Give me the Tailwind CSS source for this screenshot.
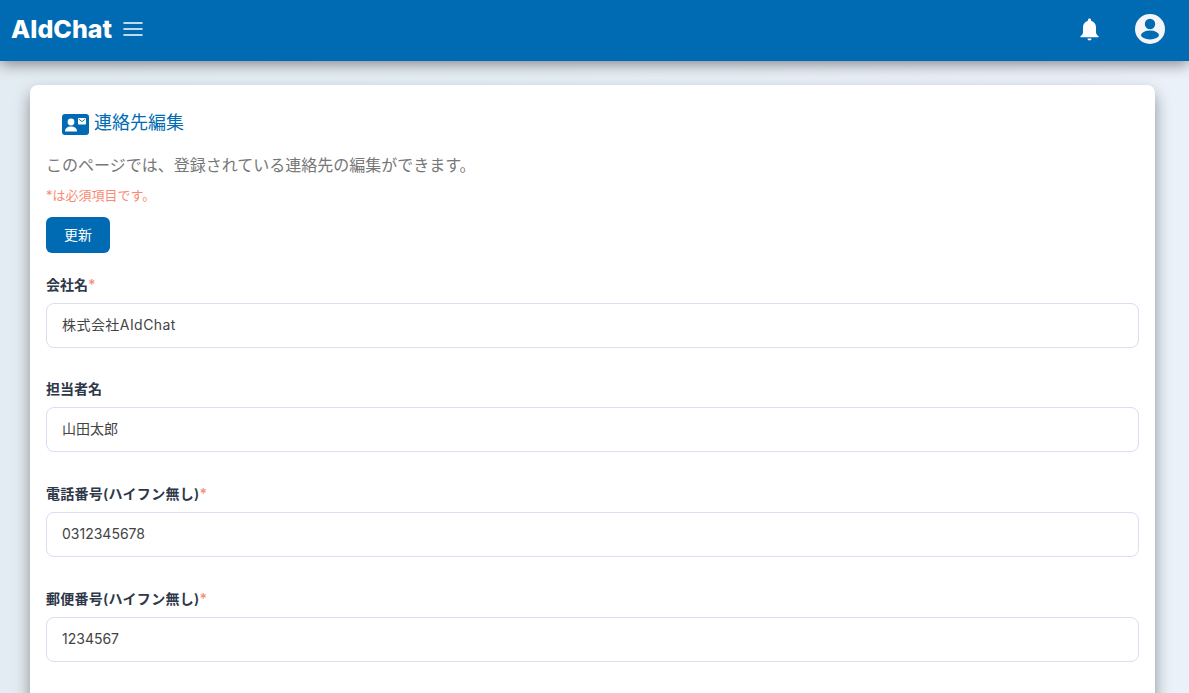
<!DOCTYPE html>
<html lang="ja">
<head>
  <meta charset="UTF-8">
  <meta name="viewport" content="width=device-width, initial-scale=1.0">
  <title>連絡先編集</title>
  <script src="https://cdn.jsdelivr.net/npm/@tailwindcss/browser@4"></script>
</head>
<body class="h-[693px] overflow-hidden bg-linear-to-r from-[#e4ecf3] to-[#eaf1f9] text-[#333] font-['Inter','Noto_Sans_CJK_JP',sans-serif]">
  <!-- header -->
  <header class="relative z-10 flex h-[61px] items-center justify-between bg-[#006bb3] pb-[3px] pl-[11px] pr-[23px] shadow-[0_3px_14px_rgba(0,0,0,0.45)]">
    <div class="flex items-center gap-[9px]">
      <span class="text-[25px] font-extrabold leading-none text-white">AIdChat</span>
      <svg class="h-[24px] w-[24px]" viewBox="0 0 24 24" fill="none" stroke="white" stroke-width="1.6" stroke-linecap="round">
        <path d="M3 6h18M3 12h18M3 18h18"/>
      </svg>
    </div>
    <div class="flex items-center gap-[31px]">
      <svg class="h-[27px] w-[27px]" viewBox="0 0 24 24" fill="white">
        <path d="M12 2.200c-.8 0-1.400.6-1.400 1.400v.6C7.900 4.900 6.200 7.200 6.200 10v4.600c0 1.400-1 2.400-2.200 3.200v1h16v-1c-1.200-.8-2.200-1.800-2.200-3.200V10c0-2.800-1.700-5.100-4.400-5.800v-.6c0-.8-.6-1.400-1.400-1.400z"/>
        <path d="M10.200 20h3.600c0 1-.8 1.800-1.800 1.800s-1.800-.8-1.800-1.800z"/>
      </svg>
      <svg class="h-[32px] w-[32px]" viewBox="0 0 32 32">
        <circle cx="16" cy="16" r="15" fill="#f3f5f8"/>
        <circle cx="16" cy="11" r="5.200" fill="#006bb3"/>
        <ellipse cx="16" cy="22" rx="9" ry="4.400" fill="#006bb3"/>
      </svg>
    </div>
  </header>

  <main class="pl-[30px] pr-[34px] pt-[24px]">
    <div class="rounded-[8px] bg-white px-[16px] pt-[22px] pb-20 shadow-[0_8px_16px_rgba(0,0,0,0.4)]">
      <div class="flex items-center gap-[5px] pl-[16px]">
        <svg class="mt-[3px] h-[21px] w-[27px]" viewBox="0 0 27 21">
          <rect width="27" height="21" rx="3" fill="#006bb3"/>
          <circle cx="9" cy="8" r="3.400" fill="white"/>
          <path d="M3 17.500c0-3.200 2.600-5 6-5s6 1.800 6 5z" fill="white"/>
          <rect x="16" y="4" width="8" height="6.500" rx=".8" fill="white"/>
          <path d="M16.800 5.200l3.200 2.400 3.200-2.400" fill="none" stroke="#006bb3" stroke-width=".9"/>
        </svg>
        <h1 class="text-[18px] leading-[32px] text-[#006bb3]">連絡先編集</h1>
      </div>
      <p class="mt-[14px] text-[16px] leading-[24px] text-[#777]">このページでは、登録されている連絡先の編集ができます。</p>
      <p class="mt-[9px] text-[13px] leading-[19px] text-[#fa8a72]">*は必須項目です。</p>
      <button class="mt-[12px] block h-[36px] w-[64px] rounded-[6px] bg-[#006bb3] pb-[2px] text-[14px] text-white">更新</button>

      <div class="mt-[20.9px] flex flex-col gap-[30.55px]">
        <div>
          <label class="block text-[14px] font-semibold leading-[21px] text-[#2d3748]">会社名<span class="text-[#f5907a]">*</span></label>
          <input class="mt-[8px] block h-[45px] w-full rounded-[8px] border border-[#d8dfee] px-[15px] pb-[3px] text-[14px] tracking-[0.45px] text-[#444]" value="株式会社AIdChat">
        </div>
        <div>
          <label class="block text-[14px] font-semibold leading-[21px] text-[#2d3748]">担当者名</label>
          <input class="mt-[8px] block h-[45px] w-full rounded-[8px] border border-[#d8dfee] px-[15px] pb-[3px] text-[14px] text-[#444]" value="山田太郎">
        </div>
        <div>
          <label class="block text-[14px] font-semibold leading-[21px] tracking-[0.25px] text-[#2d3748]">電話番号(ハイフン無し)<span class="text-[#f5907a]">*</span></label>
          <input class="mt-[8px] block h-[45px] w-full rounded-[8px] border border-[#d8dfee] px-[15px] pb-[2px] text-[14px] text-[#444]" value="0312345678">
        </div>
        <div>
          <label class="block text-[14px] font-semibold leading-[21px] tracking-[0.25px] text-[#2d3748]">郵便番号(ハイフン無し)<span class="text-[#f5907a]">*</span></label>
          <input class="mt-[8px] block h-[45px] w-full rounded-[8px] border border-[#d8dfee] px-[15px] pb-[2px] text-[14px] text-[#444]" value="1234567">
        </div>
      </div>
    </div>
  </main>
</body>
</html>
